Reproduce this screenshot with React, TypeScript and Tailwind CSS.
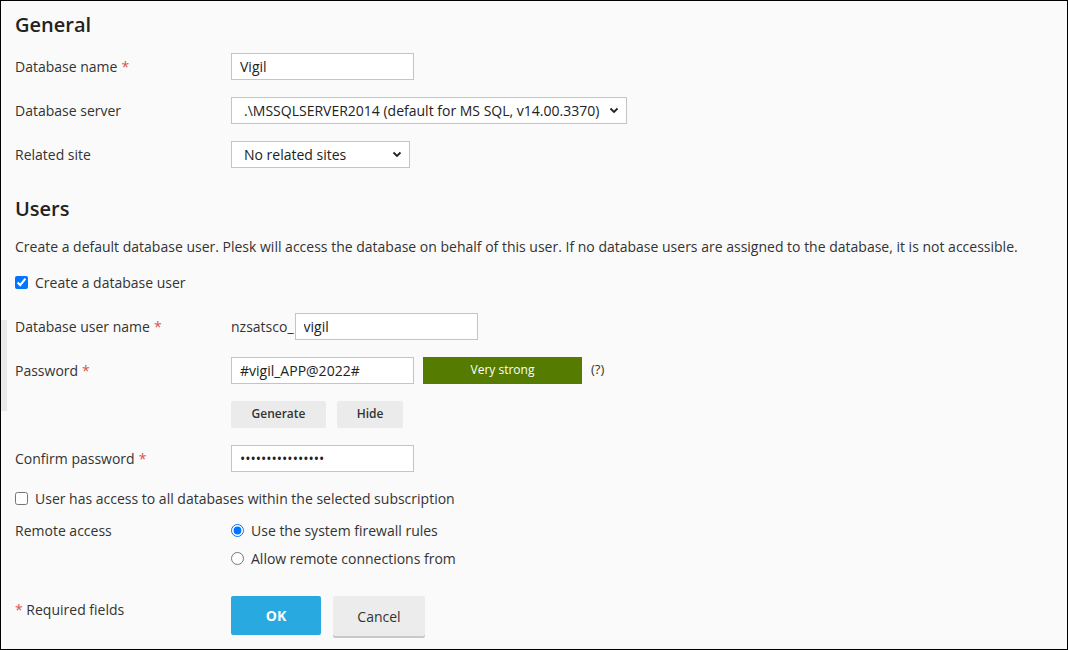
import { ReactNode } from "react";

const font = { fontFamily: '"Open Sans", "Noto Sans", sans-serif' };

const Req = () => <span className="text-[#d9534f] ml-1">*</span>;

const Row = ({ label, children, h = "h-[44px]" }: { label?: ReactNode; children?: ReactNode; h?: string }) => (
	<div className={`flex items-center ${h}`}>
		<div className="w-[216px] shrink-0">{label}</div>
		<div className="flex items-center">{children}</div>
	</div>
);

const TextBox = ({ value, w = "w-[183px]", type = "text" }: { value: string; w?: string; type?: string }) => (
	<input
		type={type}
		defaultValue={value}
		readOnly
		style={font}
		className={`${w} h-[27px] border border-[#c4c4c4] bg-white px-[8px] text-[14px] text-[#222] outline-none`}
	/>
);

const Select = ({ text, w }: { text: string; w: string }) => (
	<div className={`${w} h-[27px] border border-[#c4c4c4] bg-white flex items-center justify-between pl-[12px] pr-[6px] text-[14px] text-[#222]`}>
		<span>{text}</span>
		<svg width="12" height="12" viewBox="0 0 12 12">
			<path d="M2.5 4.5 L6 8 L9.5 4.5" fill="none" stroke="#222" strokeWidth="1.8" />
		</svg>
	</div>
);

const GrayBtn = ({ text, w }: { text: string; w: string }) => (
	<button className={`${w} h-[27px] bg-[#ebebeb] text-[12px] font-semibold text-[#333] rounded-[2px]`}>{text}</button>
);

export default function App() {
	return (
		<div
			style={font}
			className="relative w-[1068px] h-[650px] border border-black bg-[#fafafa] pl-[14px] text-[14px] text-[#333] overflow-hidden"
		>
			<div className="absolute left-0 top-[319px] w-[6px] h-[91px] bg-[#e9e9e9]"></div>

			<div className="h-[43px] pt-[4px] flex items-center text-[20px] font-semibold text-[#222]">General</div>
			<Row label={<>Database name<Req /></>}>
				<TextBox value="Vigil" />
			</Row>
			<Row label="Database server">
				<Select text=".\MSSQLSERVER2014 (default for MS SQL, v14.00.3370)" w="w-[396px]" />
			</Row>
			<Row label="Related site">
				<Select text="No related sites" w="w-[179px]" />
			</Row>

			<div className="mt-[15px] h-[36px] flex items-center text-[20px] font-semibold text-[#222]">Users</div>
			<div className="h-[38px] flex items-center">
				Create a default database user. Plesk will access the database on behalf of this user. If no database users are
				assigned to the database, it is not accessible.
			</div>
			<label className="h-[35px] flex items-center gap-[7px]">
				<input type="checkbox" defaultChecked className="w-[13px] h-[13px] m-0" />
				Create a database user
			</label>

			<div className="mt-[4px]">
				<Row label={<>Database user name<Req /></>}>
					<span className="mr-[1px]">nzsatsco_</span>
					<TextBox value="vigil" />
				</Row>
				<Row label={<>Password<Req /></>}>
					<TextBox value="#vigil_APP@2022#" />
					<div className="ml-[9px] w-[159px] h-[27px] bg-[#557b00] text-white text-[12px] flex items-center justify-center">
						Very strong
					</div>
					<span className="ml-[9px] text-[13px]">(?)</span>
				</Row>
				<Row>
					<GrayBtn text="Generate" w="w-[95px]" />
					<span className="w-[11px]"></span>
					<GrayBtn text="Hide" w="w-[66px]" />
				</Row>
				<Row label={<>Confirm password<Req /></>}>
					<TextBox value="#vigil_APP@2022#" type="password" />
				</Row>
			</div>

			<label className="h-[36px] flex items-center gap-[7px]">
				<input type="checkbox" className="w-[13px] h-[13px] m-0" />
				User has access to all databases within the selected subscription
			</label>

			<div className="flex">
				<div className="w-[216px] shrink-0 h-[28px] flex items-center">Remote access</div>
				<div className="flex flex-col">
					<label className="h-[28px] flex items-center gap-[7px]">
						<input type="radio" name="ra" defaultChecked className="w-[13px] h-[13px] m-0" />
						Use the system firewall rules
					</label>
					<label className="h-[28px] flex items-center gap-[7px]">
						<input type="radio" name="ra" className="w-[13px] h-[13px] m-0" />
						Allow remote connections from
					</label>
				</div>
			</div>

			<div className="flex mt-[14px]">
				<div className="w-[216px] shrink-0 pt-[13px]">
					<span className="text-[#d9534f]">*</span> Required fields
				</div>
				<div className="flex gap-[12px] pt-[10px]">
					<button className="w-[90px] h-[39px] bg-[#28a9e0] text-white font-bold text-[14px] rounded-[2px]">OK</button>
					<button className="w-[92px] h-[40px] bg-[#ececec] text-[#333] text-[14px] rounded-[2px] shadow-[0_2px_0_#c8c8c8]">
						Cancel
					</button>
				</div>
			</div>
		</div>
	);
}
